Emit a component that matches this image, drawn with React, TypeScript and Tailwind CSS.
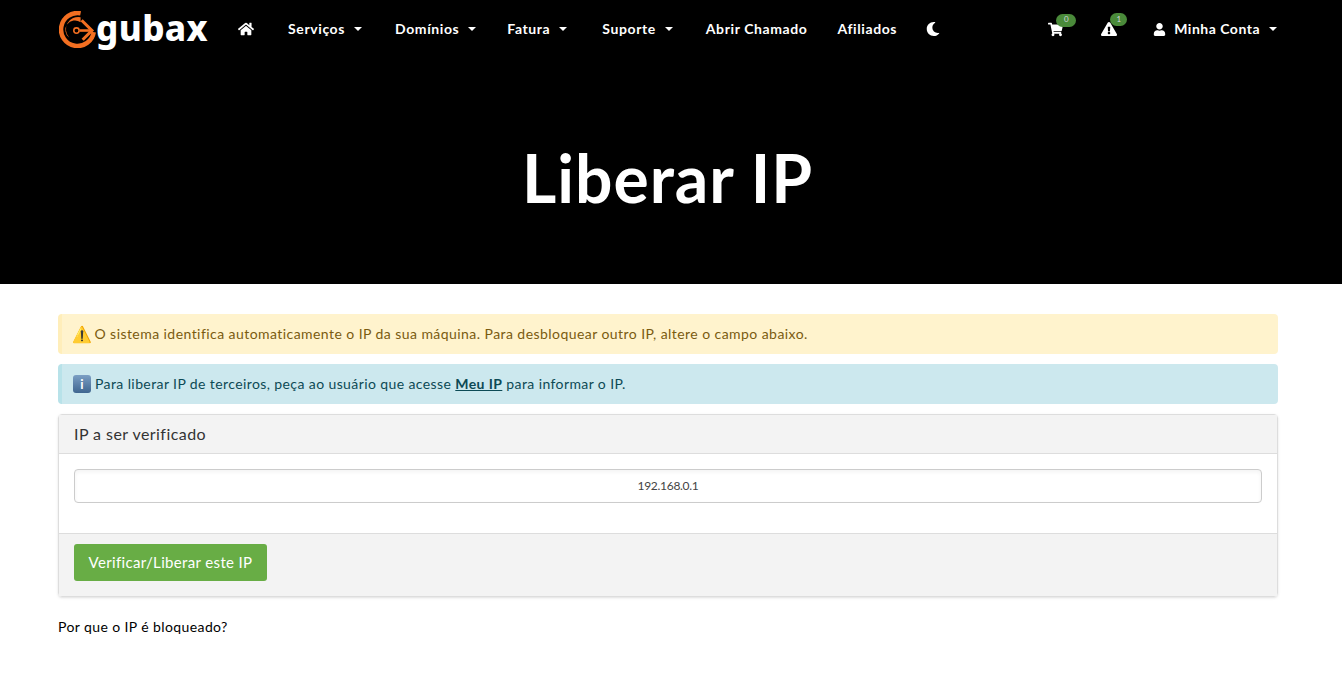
import { FaHome, FaShoppingCart, FaExclamationTriangle, FaUser, FaMoon } from "react-icons/fa";

const font = "font-['Lato','Noto_Sans',sans-serif]";

function Caret() {
  return <span className="inline-block border-x-4 border-t-4 border-x-transparent border-t-white" />;
}

function Logo() {
  return (
    <div className="flex items-center">
      <svg width="37" height="37" viewBox="0 0 36 36" className="ml-[1px]">
        <path d="M21 2.3A16 16 0 1 0 33.8 20.5" fill="none" stroke="#f36f21" strokeWidth="4.4" />
        <path d="M21 6V11A9 9 0 0 0 10 26A12 12 0 0 1 21 6Z" fill="#f36f21" />
        <path d="M22 9L32 19L23 28" fill="none" stroke="#f36f21" strokeWidth="3" />
        <path d="M20 19H31" fill="none" stroke="#f36f21" strokeWidth="2.5" />
        <circle cx="17" cy="19" r="2.6" fill="none" stroke="#f36f21" strokeWidth="1.5" />
      </svg>
      <span className="-mt-1 font-['Noto_Sans',sans-serif] text-[35px] leading-none font-extrabold tracking-[0.4px] text-white">gubax</span>
    </div>
  );
}

function NavItem({ label, caret, className }: { label: string; caret?: boolean; className: string }) {
  return (
    <a className={`flex items-center text-sm font-bold text-white ${className}`}>
      {label}
      {caret && <span className="ml-[9px] flex"><Caret /></span>}
    </a>
  );
}

export default function App() {
  return (
    <div className={`min-h-[680px] bg-white ${font} text-sm text-[#212529]`}>
      <div className="h-[284px] bg-black">
        <nav className="flex h-[58px] items-center pr-[65px] pl-[58px] text-white">
          <Logo />
          <FaHome className="ml-[30px] text-base" />
          <NavItem label="Serviços" caret className="ml-[34px] tracking-[0.6px]" />
          <NavItem label="Domínios" caret className="ml-[33px] tracking-[0.6px]" />
          <NavItem label="Fatura" caret className="ml-[31px] tracking-[0.6px]" />
          <NavItem label="Suporte" caret className="ml-[35px] tracking-[0.6px]" />
          <NavItem label="Abrir Chamado" className="ml-[33px] tracking-[0.6px]" />
          <NavItem label="Afiliados" className="ml-[30px] tracking-[0.6px]" />
          <FaMoon className="ml-[29px] text-sm" />
          <div className="ml-auto flex items-center">
            <div className="relative mr-[38px]">
              <FaShoppingCart className="text-[15px]" />
              <span className="absolute top-[-8px] left-[8px] flex h-[13px] w-[20px] items-center justify-center rounded-full bg-[#4a8a3a] text-[8px] text-gray-300">0</span>
            </div>
            <div className="relative mr-[36px]">
              <FaExclamationTriangle className="text-base" />
              <span className="absolute top-[-8px] left-[9px] flex h-[13px] w-[17px] items-center justify-center rounded-full bg-[#4a8a3a] text-[8px] text-gray-300">1</span>
            </div>
            <FaUser className="text-[13px]" />
            <NavItem label="Minha Conta" caret className="ml-[8px] tracking-[0.5px]" />
          </div>
        </nav>
        <h1 className="mt-[82px] pr-[7px] text-center text-[66px] leading-[76px] font-bold tracking-[1px] text-white">Liberar IP</h1>
      </div>

      <main className="pr-[64px] pl-[58px] pt-[30px]">
        <div className="flex h-10 items-center gap-[2px] rounded border-l-4 border-[#ffeeba] bg-[#fff3cd] pr-[11px] pl-[10px] tracking-[0.44px] text-[#7a5b10]">
          <span className="text-[16px] leading-none">⚠️</span>
          O sistema identifica automaticamente o IP da sua máquina. Para desbloquear outro IP, altere o campo abaixo.
        </div>
        <div className="mt-[10px] flex h-10 items-center gap-[4px] rounded border-l-4 border-[#b8e2e9] bg-[#cce8ee] px-[11px] tracking-[0.4px] text-[#0c4a55]">
          <span className="flex h-[18px] w-[18px] items-center justify-center rounded-[3px] bg-linear-to-b from-[#7c9fc4] to-[#3f6690] text-[13px] leading-none font-bold text-white">i</span>
          <span>
            Para liberar IP de terceiros, peça ao usuário que acesse <a className="font-bold underline">Meu IP</a> para informar o IP.
          </span>
        </div>

        <div className="mt-[10px] rounded border border-[#ddd] shadow-sm">
          <div className="flex h-[39px] items-center border-b border-[#ddd] bg-[#f3f3f3] px-[15px] text-base tracking-[0.45px] text-[#333]">IP a ser verificado</div>
          <div className="h-[79px] bg-white px-[15px] pt-[15px]">
            <input
              readOnly
              value="192.168.0.1"
              className="h-[34px] w-full rounded border border-[#ccc] pb-[2px] text-center text-xs tracking-[-0.3px] text-[#444] shadow-inner outline-none"
            />
          </div>
          <div className="h-[63px] border-t border-[#ddd] bg-[#f3f3f3] px-[15px] pt-[10px]">
            <button className="h-[37px] w-[193px] rounded-[3px] bg-[#68ad45] text-[15px] tracking-[0.35px] text-white">Verificar/Liberar este IP</button>
          </div>
        </div>

        <p className="mt-[20px] text-sm tracking-[0.4px] text-black">Por que o IP é bloqueado?</p>
      </main>
    </div>
  );
}
